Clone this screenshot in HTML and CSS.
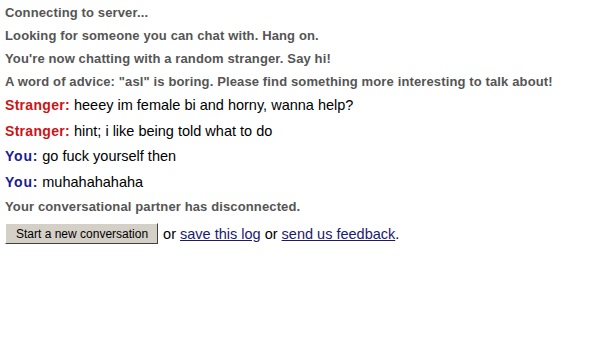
FILE: index.html
```html
<!DOCTYPE html>
<html>
<head>
<meta charset="utf-8">
<link rel="stylesheet" href="styles.css">
</head>
<body>
<div class="log">
  <p class="sys">Connecting to server...</p>
  <p class="sys">Looking for someone you can chat with. Hang on.</p>
  <p class="sys">You're now chatting with a random stranger. Say hi!</p>
  <p class="sys">A word of advice: "asl" is boring. Please find something more interesting to talk about!</p>
  <p class="msg"><span class="stranger">Stranger:</span> heeey im female bi and horny, wanna help?</p>
  <p class="msg"><span class="stranger">Stranger:</span> hint; i like being told what to do</p>
  <p class="msg"><span class="you">You:</span> go fuck yourself then</p>
  <p class="msg"><span class="you">You:</span> muhahahahaha</p>
  <p class="sys">Your conversational partner has disconnected.</p>
  <p class="actions"><button class="btn">Start a new conversation</button> or <a href="#">save this log</a> or <a href="#">send us feedback</a>.</p>
</div>
</body>
</html>
```
FILE: styles.css
```css
body {
  margin: 0;
  background: #fff;
  font-family: "Liberation Sans", Arial, sans-serif;
  font-size: 13px;
  color: #000;
}
.log {
  padding: 1px 5px;
  display: flex;
  flex-direction: column;
}
.log p {
  margin: 0;
}
.sys {
  font-weight: bold;
  color: #555;
  letter-spacing: 0.13px;
  line-height: 23px;
}
.msg {
  line-height: 25.5px;
  font-size: 14.5px;
}
.stranger {
  font-size: 14px;
  font-weight: bold;
  color: #cc1414;
  letter-spacing: 0.3px;
}
.you {
  font-size: 14px;
  font-weight: bold;
  color: #1c1c96;
  letter-spacing: 0.8px;
}
.log .actions {
  margin-top: 5px;
  display: flex;
  align-items: center;
  font-size: 14.5px;
  white-space: pre;
}
.btn {
  font-family: "Liberation Sans", Arial, sans-serif;
  font-size: 12px;
  background: #d4d0c8;
  border: 1px solid;
  border-color: #fff #404040 #404040 #fff;
  padding: 0 9px 0 10px;
  height: 21px;
  color: #000;
  margin-right: 1px;
}
a {
  color: #1a1a70;
}
```
